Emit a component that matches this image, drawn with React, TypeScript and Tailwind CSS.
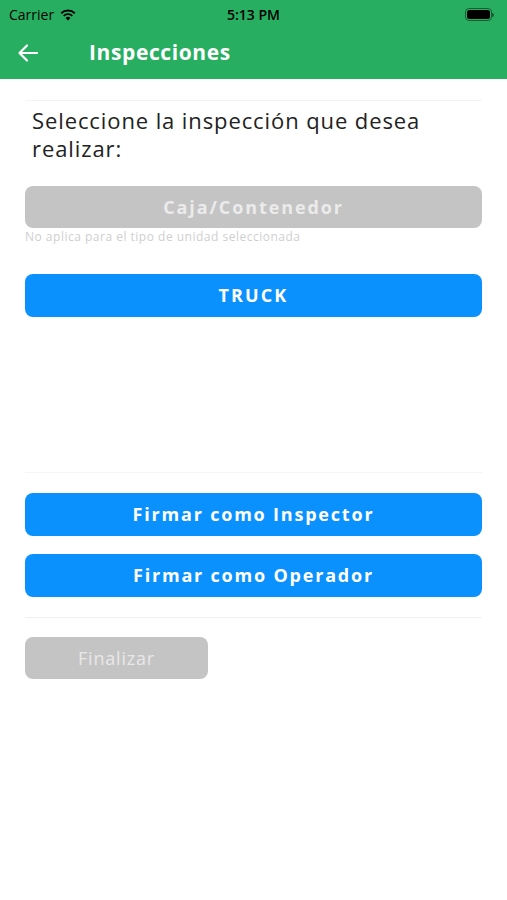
import React from "react";

const font = { fontFamily: '"Open Sans", "DejaVu Sans", sans-serif' };

function Wifi() {
  return (
    <svg width="16" height="12" viewBox="0 0 16 12">
      <path d="M8 11.5 L5.6 8.9 A3.4 3.4 0 0 1 10.4 8.9 Z" fill="#000" />
      <path d="M3.7 6.9 A6.2 6.2 0 0 1 12.3 6.9" stroke="#000" strokeWidth="1.9" fill="none" />
      <path d="M1.2 4.3 A9.8 9.8 0 0 1 14.8 4.3" stroke="#000" strokeWidth="1.9" fill="none" />
    </svg>
  );
}

function Battery() {
  return (
    <div className="flex items-center">
      <div className="w-[27px] h-[13px] rounded-[4px] border border-[#1c5a33] p-[1px]">
        <div className="w-full h-full rounded-[2.5px] bg-black" />
      </div>
      <div className="w-[2px] h-[4px] bg-[#1c5a33] rounded-r-sm" />
    </div>
  );
}

export default function App() {
  return (
    <div className="w-[507px] h-[900px] bg-white" style={font}>
      <div className="bg-[#27ae60] h-[79px] flex flex-col">
        <div className="h-[29px] flex items-center justify-between px-[9px] relative">
          <div className="flex items-center gap-[6px] text-[14px] text-black">
            <span>Carrier</span>
            <Wifi />
          </div>
          <div className="absolute left-0 right-0 text-center text-[14px] font-semibold text-black">5:13 PM</div>
          <div className="pr-[4px]"><Battery /></div>
        </div>
        <div className="flex-1 flex items-center pb-[2px]">
          <div className="w-[89px] pl-[17px] flex items-center">
            <svg width="22" height="20" viewBox="0 0 22 20">
              <path d="M20 10 H3 M10 2.5 L2.5 10 L10 17.5" stroke="#fff" strokeWidth="2.2" fill="none" strokeLinecap="round" strokeLinejoin="round" />
            </svg>
          </div>
          <span className="text-white text-[21px] font-bold tracking-[0.6px]">Inspecciones</span>
        </div>
      </div>

      <div className="px-[25px]">
        <div className="mt-[21px] h-px bg-[#f3f3f3]" />
        <div className="mt-[5px] pl-[7px] text-[22px] leading-[28px] text-[#222] tracking-[0.9px]">
          Seleccione la inspección que desea
          <br />
          realizar:
        </div>
        <div className="mt-[24px] h-[42px] rounded-[8px] bg-[#c4c4c4] flex items-center justify-center text-[18px] font-bold text-[#ebebeb] tracking-[1.9px]">
          Caja/Contenedor
        </div>
        <div className="mt-[2px] text-[12px] leading-[14px] text-[#cfcfcf] tracking-[0.5px]">No aplica para el tipo de unidad seleccionada</div>
        <div className="mt-[30px] h-[43px] rounded-[8px] bg-[#0a91fd] flex items-center justify-center text-[18px] font-bold text-white tracking-[2.1px]">
          TRUCK
        </div>
        <div className="mt-[155px] h-px bg-[#f5f5f5]" />
        <div className="mt-[20px] h-[43px] rounded-[8px] bg-[#0a91fd] flex items-center justify-center text-[18px] font-bold text-white tracking-[1.8px]">
          Firmar como Inspector
        </div>
        <div className="mt-[18px] h-[43px] rounded-[8px] bg-[#0a91fd] flex items-center justify-center text-[18px] font-bold text-white tracking-[1.8px]">
          Firmar como Operador
        </div>
        <div className="mt-[20px] h-px bg-[#f1f1f1]" />
        <div className="mt-[19px] w-[183px] h-[42px] rounded-[8px] bg-[#c4c4c4] flex items-center justify-center text-[18px] text-[#e8e8e8] tracking-[0.8px]">
          Finalizar
        </div>
      </div>
    </div>
  );
}
